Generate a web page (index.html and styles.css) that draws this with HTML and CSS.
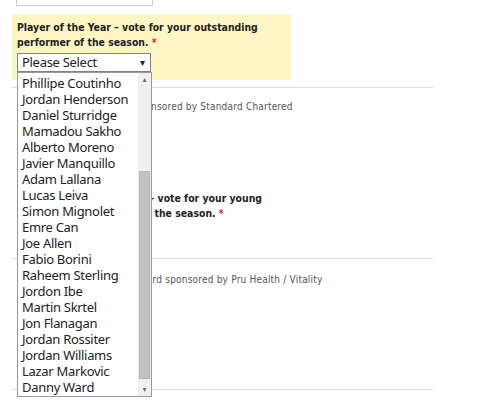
FILE: index.html
```html
<!DOCTYPE html>
<html lang="en">
<head>
<meta charset="UTF-8" />
<title>Player of the Year vote</title>
<link rel="stylesheet" href="styles.css">
</head>
<body>
<div class="form">
  <div class="prev-field"></div>

  <div class="question active">
    <div class="label">Player of the Year – vote for your outstanding<br>performer of the season. <span class="req">*</span></div>
    <div class="select-wrap">
      <div class="select">Please Select <span class="arrow">&#9662;</span></div>
      <div class="dropdown">
        <ul class="options">
          <li>Phillipe Coutinho</li>
          <li>Jordan Henderson</li>
          <li>Daniel Sturridge</li>
          <li>Mamadou Sakho</li>
          <li>Alberto Moreno</li>
          <li>Javier Manquillo</li>
          <li>Adam Lallana</li>
          <li>Lucas Leiva</li>
          <li>Simon Mignolet</li>
          <li>Emre Can</li>
          <li>Joe Allen</li>
          <li>Fabio Borini</li>
          <li>Raheem Sterling</li>
          <li>Jordon Ibe</li>
          <li>Martin Skrtel</li>
          <li>Jon Flanagan</li>
          <li>Jordan Rossiter</li>
          <li>Jordan Williams</li>
          <li>Lazar Markovic</li>
          <li>Danny Ward</li>
        </ul>
        <div class="scrollbar">
          <span class="up">&#9652;</span>
          <div class="thumb"></div>
          <span class="down">&#9662;</span>
        </div>
      </div>
    </div>
  </div>
  <div class="rule"></div>
  <p class="sponsor">Player of the Year Award sponsored by Standard Chartered</p>

  <div class="question second">
    <div class="label">Young Player of the Year – vote for your young<br>outstanding performer of the season. <span class="req">*</span></div>
    <div class="select plain">Please Select <span class="arrow">&#9662;</span></div>
  </div>
  <div class="rule"></div>
  <p class="sponsor">Young Player of the Year Award sponsored by Pru Health / Vitality</p>
  <div class="rule last"></div>
</div>
</body>
</html>
```
FILE: styles.css
```css
body {
  margin: 0;
  min-height: 404px;
  background: #fff;
  color: #222;
  font-family: "DejaVu Sans Condensed", "DejaVu Sans", sans-serif;
}
.form {
  padding-left: 12px;
  padding-bottom: 14px;
  width: 421px;
}
.prev-field {
  margin-left: 4px;
  width: 135px;
  height: 5px;
  border: 1px solid #ccc;
  border-top: none;
}
.question {
  margin-top: 8px;
  width: 269px;
  padding: 6px 5px 8px;
}
.question.active {
  background: #fdf5c2;
}
.label {
  font-weight: 700;
  font-size: 10.4px;
  line-height: 15px;
  color: #222;
}
.req {
  color: #c8323a;
}
.select-wrap {
  position: relative;
  margin-top: 3px;
}
.select {
  width: 128px;
  height: 17px;
  padding-left: 4px;
  border: 1px solid #6d86a8;
  font-family: "Noto Sans", sans-serif;
  font-size: 13px;
  letter-spacing: -0.3px;
  line-height: 17px;
  color: #222;
  position: relative;
  background: #fff;
}
.select.plain {
  margin-top: 3px;
  border-color: #aaa;
}
.arrow {
  position: absolute;
  right: 5px;
  top: 0;
  font-size: 10px;
}
.dropdown {
  position: absolute;
  left: 0;
  top: 19px;
  width: 133px;
  border: 1px solid #999;
  background: #fff;
  display: flex;
  z-index: 2;
}
.options {
  list-style: none;
  margin: 0;
  padding: 2px 0 1px 4px;
  flex: 1;
  font-family: "Noto Sans", sans-serif;
  font-size: 13px;
  letter-spacing: -0.3px;
  color: #222;
}
.options li {
  height: 16px;
  line-height: 16px;
}
.scrollbar {
  width: 13px;
  background: #f0f0f0;
  display: flex;
  flex-direction: column;
  align-items: center;
  font-size: 8px;
  color: #666;
}
.scrollbar .up, .scrollbar .down {
  height: 13px;
  line-height: 13px;
}
.thumb {
  margin-top: 85px;
  width: 11px;
  height: 208px;
  background: #c2c2c2;
  border: 1px solid #b5b5b5;
  box-sizing: border-box;
}
.scrollbar .down {
  margin-top: auto;
}
.rule {
  margin-top: 7px;
  height: 1px;
  background: #ddd;
}
.sponsor {
  margin: 13px 0 0 5px;
  font-size: 10px;
  letter-spacing: 0.2px;
  line-height: 12px;
  color: #555;
}
.question.second {
  margin-top: 72px;
}
.question.second + .rule + .sponsor {
  margin-top: 15px;
}
.rule.last {
  margin-top: 103px;
}
```
